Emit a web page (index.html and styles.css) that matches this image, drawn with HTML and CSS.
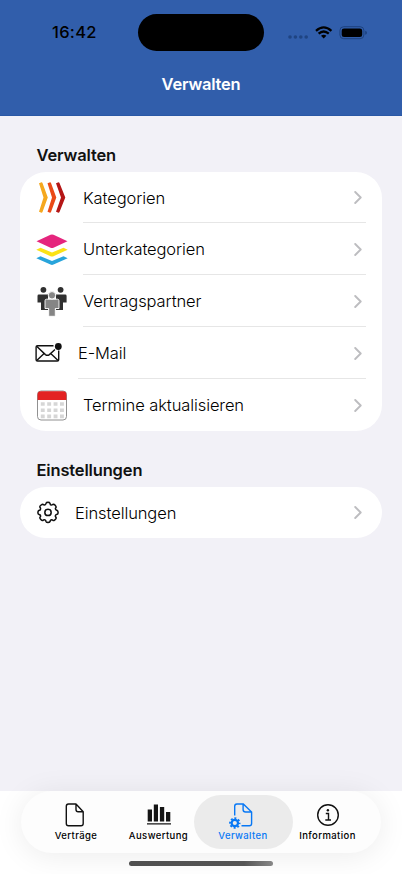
FILE: index.html
```html
<!DOCTYPE html>
<html lang="de">
<head>
<meta charset="utf-8">
<meta name="viewport" content="width=device-width, initial-scale=1">
<title>Verwalten</title>
<link rel="stylesheet" href="styles.css">
</head>
<body>
<div class="screen">
  <header class="header">
    <div class="status">
      <time class="clock">16:42</time>
      <div class="island"></div>
      <svg class="indicators" width="80" height="14" viewBox="0 0 80 14">
        <g fill="#1f4482"><circle cx="2" cy="11" r="1.8"/><circle cx="7.4" cy="11" r="1.8"/><circle cx="12.8" cy="11" r="1.8"/><circle cx="18.2" cy="11" r="1.8"/></g>
        <g fill="none" stroke="#000" stroke-width="2.3"><path d="M28 4.8Q35.700 -2 43.400 4.800"/><path d="M30.600 7.700Q35.700 3.200 40.800 7.700"/></g>
        <path d="M33 9.800Q35.700 7.600 38.400 9.800L35.700 12.600Z"/>
        <rect x="51.900" y=".7" width="24" height="12" rx="3.800" fill="none" stroke="#1d427f" stroke-width="1"/>
        <rect x="53.700" y="2.400" width="20.500" height="8.600" rx="2.300"/>
        <path d="M77.200 4.700Q79 5.200 79 6.700T77.200 8.700Z" fill="#1d427f"/>
      </svg>
    </div>
    <h1 class="title">Verwalten</h1>
  </header>

  <main class="content">
    <h2 class="section-title">Verwalten</h2>
    <ul class="card">
      <li class="row">
        <svg class="icon" width="32" height="32" viewBox="0 0 32 32">
          <path fill="#f5a81f" d="M3 1.200L5.600 .2Q6 0 6.500 1L11.800 15.500L6.500 30Q6 31 5.500 30.800L3 29.700L7.500 15.500Z"/>
          <path fill="#ea4a17" d="M11.500 1.200L14.100 .2Q14.500 0 15 1L20.300 15.500L15 30Q14.500 31 14 30.800L11.500 29.700L16 15.500Z"/>
          <path fill="#b51616" d="M20 1.200L22.600 .2Q23 0 23.500 1L29.300 15.500L23.500 30Q23 31 22.500 30.800L20 29.700L25 15.500Z"/>
        </svg>
        <div class="cell"><span class="label">Kategorien</span><svg class="chevron" width="8" height="13" viewBox="0 0 8 13"><path d="M1.200 1L6.700 6.500L1.200 12"/></svg></div>
      </li>
      <li class="row">
        <svg class="icon" width="32" height="32" viewBox="0 0 32 32">
          <path fill="#e5257d" d="M.5 7.200L14.500 .7Q16 .1 17.500 .7L31.500 7.200L17.500 13.700Q16 14.300 14.500 13.700Z"/>
          <path fill="#fbe216" d="M.3 15.800L4.500 13.800L16 18.600L27.500 13.800L31.700 15.800L17.500 22.200Q16 22.800 14.500 22.200Z"/>
          <path fill="#28a4db" d="M.3 24.200L4.500 22.200L16 27L27.500 22.200L31.700 24.200L17.500 30.600Q16 31.200 14.500 30.600Z"/>
        </svg>
        <div class="cell"><span class="label">Unterkategorien</span><svg class="chevron" width="8" height="13" viewBox="0 0 8 13"><path d="M1.200 1L6.700 6.500L1.200 12"/></svg></div>
      </li>
      <li class="row">
        <svg class="icon" width="32" height="32" viewBox="0 0 32 32">
          <g fill="#303030"><circle cx="7.400" cy="3.800" r="2.900"/><circle cx="24.600" cy="3.800" r="2.900"/>
          <path d="M2.800 8.600H12V24H5V16.500H1.500V10Q1.500 8.600 2.800 8.600Z"/><path d="M20 8.600H29.200Q30.600 8.600 30.600 10V16.500H27V24H20Z"/></g>
          <g fill="#858585" stroke="#fff" stroke-width=".9"><path d="M10.500 13.200H21.500Q23 13.200 23 14.700V22.500H19.300V29.500Q19.300 30.300 18.500 30.300H13.500Q12.700 30.300 12.700 29.500V22.500H9V14.700Q9 13.200 10.500 13.200Z"/><circle cx="16" cy="9.300" r="3.700"/></g>
        </svg>
        <div class="cell"><span class="label">Vertragspartner</span><svg class="chevron" width="8" height="13" viewBox="0 0 8 13"><path d="M1.200 1L6.700 6.500L1.200 12"/></svg></div>
      </li>
      <li class="row">
        <svg class="icon" width="27" height="32" viewBox="0 0 27 32">
          <g fill="none" stroke="#111" stroke-width="1.400"><path d="M17.500 7.700H1.500Q.1 7.700 .1 9V21.700Q.1 23 1.500 23H21.300Q22.700 23 22.700 21.700V12.500"/><path d="M.9 8.500L9.400 16.600Q11.400 18 13.400 16.600L19 11.500M.7 22.500L8.100 15.500M22.100 22.500L14.700 15.500"/></g>
          <circle cx="22.300" cy="8.500" r="3.400" fill="#111"/>
        </svg>
        <div class="cell"><span class="label">E-Mail</span><svg class="chevron" width="8" height="13" viewBox="0 0 8 13"><path d="M1.200 1L6.700 6.500L1.200 12"/></svg></div>
      </li>
      <li class="row">
        <svg class="icon" width="32" height="32" viewBox="0 0 32 32">
          <rect x="1.500" y="1" width="29" height="29" rx="3.500" fill="#fff" stroke="#858585" stroke-width=".9"/>
          <path d="M1.600 10V4.300Q1.600 1.200 5 1.200H27Q30.400 1.200 30.400 4.300V10Z" fill="#e32222"/>
          <path d="M4.800 14H28M4.800 20.200H28M4.800 26.400H28" stroke="#d6d6d6" stroke-width="3.600" stroke-dasharray="3.900 2.500"/>
        </svg>
        <div class="cell"><span class="label">Termine aktualisieren</span><svg class="chevron" width="8" height="13" viewBox="0 0 8 13"><path d="M1.200 1L6.700 6.500L1.200 12"/></svg></div>
      </li>
    </ul>

    <h2 class="section-title">Einstellungen</h2>
    <ul class="card">
      <li class="row">
        <svg class="icon" width="24" height="32" viewBox="0 0 24 32">
          <g transform="translate(12 15.400) scale(1.020)" fill="none" stroke="#111" stroke-width="1.500"><circle r="3.100"/>
          <path stroke-linejoin="round" d="M-1.900 -9Q-1.600 -9.900 0 -9.900T1.900 -9L2.400 -7.600Q3.400 -6.900 4.500 -7.600L5.200 -8Q6.100 -8.100 7 -7T8 -5.200L7.400 -4.200Q7 -3 8.100 -2.300L9 -1.900Q9.900 -1.500 9.900 0T9 1.900L7.600 2.400Q6.900 3.300 7.500 4.500L8 5.200Q8.200 6 7 7T5.200 8L4.200 7.400Q3 7 2.300 8.100L1.900 9Q1.500 9.900 0 9.900T-1.900 9L-2.400 7.700Q-3.300 7 -4.500 7.500L-5.200 8Q-6 8.200 -7 7T-8 5.200L-7.400 4.200Q-7 3 -8.100 2.300L-9 1.900Q-9.900 1.500 -9.900 0T-9 -1.900L-7.700 -2.400Q-7 -3.300 -7.500 -4.500L-8 -5.200Q-8.200 -6 -7 -7T-5.200 -8L-4.200 -7.400Q-3 -7 -2.300 -8.100Z"/></g>
        </svg>
        <div class="cell"><span class="label">Einstellungen</span><svg class="chevron" width="8" height="13" viewBox="0 0 8 13"><path d="M1.200 1L6.700 6.500L1.200 12"/></svg></div>
      </li>
    </ul>
  </main>

  <footer class="footer">
    <nav class="tabs">
      <a class="tab contracts">
        <svg width="24" height="24" viewBox="0 0 24 24"><path d="M12.200 1H4.500Q2.300 1 2.300 3.200V20.500Q2.300 22.700 4.500 22.700H17Q19.200 22.700 19.200 20.500V8.700L12 1V6.500Q12 8.700 14.200 8.700H19" fill="none" stroke="#111" stroke-width="1.400" stroke-linejoin="round"/></svg>
        <span>Verträge</span>
      </a>
      <a class="tab reports">
        <svg width="24" height="24" viewBox="0 0 24 24"><path d="M.7 6.500H5V18.500H.7ZM6.800 1.500H11V18.500H6.800ZM12.900 4H17.200V18.500H12.900ZM19 9H23.300V18.500H19ZM0 20.200H24V21.500H0Z" fill="#151515"/></svg>
        <span>Auswertung</span>
      </a>
      <a class="tab manage active">
        <svg width="24" height="24" viewBox="0 0 24 24"><g fill="none" stroke="#0878f5" stroke-width="1.400"><path d="M3.700 12.500V3.200Q3.700 1 5.900 1H12.300L20.600 9V20.500Q20.600 22.700 18.400 22.700H10.500M12.100 1V6.500Q12.100 9 14.600 9H20.300"/><circle cx="3.800" cy="20" r="3.200" stroke-width="2.200"/><circle cx="3.800" cy="20" r="4.800" stroke-width="1.800" stroke-dasharray="2 1.770" stroke-dashoffset="1"/></g></svg>
        <span>Verwalten</span>
      </a>
      <a class="tab info">
        <svg width="24" height="24" viewBox="0 0 24 24"><circle cx="12" cy="12" r="10.300" fill="none" stroke="#111" stroke-width="1.400"/><circle cx="11.900" cy="7.200" r="1.200" fill="#111"/><path d="M9.800 10.500H12.500V17M9.300 17H15" fill="none" stroke="#111" stroke-width="1.400"/></svg>
        <span>Information</span>
      </a>
    </nav>
    <div class="home"></div>
  </footer>
</div>
</body>
</html>
```
FILE: styles.css
```css
* { box-sizing: border-box; margin: 0; padding: 0; }
body { font-family: Inter, "Liberation Sans", sans-serif; color: #000; }
.screen { width: 402px; height: 874px; display: flex; flex-direction: column; background: #f2f1f7; overflow: hidden; }
.header { height: 116px; background: #315eab; border-bottom: 1px solid #2a58a5; }
.status { display: flex; align-items: flex-start; padding-top: 14px; height: 70px; }
.clock { width: 138px; padding-left: 52px; font-size: 16.500px; font-weight: 500; line-height: 37px; letter-spacing: .3px; }
.island { width: 126px; height: 37px; border-radius: 19px; background: #000; }
.indicators { display: block; margin: 12px 0 0 24px; }
.title { font-size: 16.500px; font-weight: 600; line-height: 29px; color: #fff; text-align: center; letter-spacing: -.22px; }
.content { flex: 1; padding: 27px 20px 0; }
.section-title { font-size: 16.500px; font-weight: 600; line-height: 24px; height: 29px; padding-left: 16.500px; color: #111; letter-spacing: -.16px; }
.card { list-style: none; background: #fff; border-radius: 26px; padding: 0 16px; margin-bottom: 27px; overflow: hidden; }
.row { display: flex; align-items: center; height: 52px; gap: 15px; }
.row:first-child:not(:last-child) { height: 51px; }
.row:only-child { height: 51.400px; }
.icon { display: block; flex: none; overflow: visible; margin-top: 1px; }
.cell { flex: 1; height: 100%; display: flex; align-items: center; justify-content: space-between; padding: 1px 4px 0 0; border-bottom: 1px solid #e6e6e6; }
.row:last-child .cell { border: 0; padding-top: 0; }
.label { font-size: 16.500px; font-weight: 360; line-height: 22px; letter-spacing: -.1px; }
.chevron { fill: none; stroke: #bdbdc0; stroke-width: 1.900; stroke-linecap: round; stroke-linejoin: round; }
.footer { height: 83px; padding: 0 21px; background: #fff; }
.tabs { display: flex; height: 62px; padding: 4px; border-radius: 31px; background: #fdfdfd; box-shadow: 0 3px 30px rgba(0,0,0,.08); }
.tab { display: flex; flex-direction: column; align-items: center; height: 54px; padding-top: 8px; font-size: 9.500px; line-height: 12px; font-weight: 500; letter-spacing: .4px; }
.tab svg { height: 24px; margin-bottom: 3px; overflow: visible; }
.contracts { width: 100px; padding-left: 2px; }
.reports { width: 67px; margin-right: 2px; }
.manage { width: 99px; padding-right: 1px; border-radius: 27px; background: #ebebeb; color: #0878f5; }
.info { width: 69px; }
.home { width: 144px; height: 5px; margin: 8px 0 0 108px; border-radius: 3px; background: linear-gradient(90deg, #505050, #555 80%, #888); }
```
